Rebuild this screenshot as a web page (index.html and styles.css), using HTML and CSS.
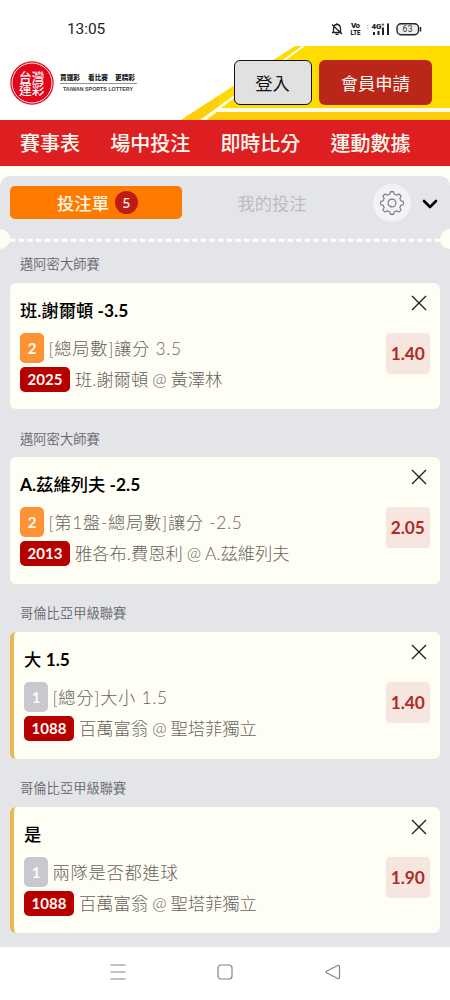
FILE: index.html
```
<!DOCTYPE html>
<html lang="zh-Hant">
<head>
<meta charset="utf-8">
<title>台灣運彩</title>
<link rel="stylesheet" href="styles.css">
</head>
<body>
<div class="status">
  <span class="clock">13:05</span>
  <svg class="status-icons" width="98" height="16" viewBox="0 0 98 16" fill="none" stroke="#222">
    <path d="M3 11.5h9.500M4.500 11.500V8c0-3 1-4.500 3.500-4.500S11.500 5 11.500 8v3.500M8 2v1.500M6.500 13.300h3M3 3.500l10 9.500" stroke-width="1.300"/>
    <g fill="#222" stroke="none" class="tiny"><text x="22" y="7.300" textLength="9">Vo</text><text x="21.500" y="14.300" textLength="10" lengthAdjust="spacingAndGlyphs">LTE</text><text x="42.500" y="8" textLength="13">4G⁺</text></g>
    <path d="M45 11v3M49.500 10v4M54 6.500V14M59 2.500V14" stroke-width="2"/>
    <path d="M38 4.500h1.500M38 7h1.500" stroke="#aaa"/>
    <rect x="68" y="2.700" width="21.500" height="11" rx="4" fill="#eee" stroke-width="1.400"/>
    <path d="M91.500 6v4.500" stroke-width="1.500"/>
    <text x="73.500" y="11.400" class="battery" textLength="10">63</text>
  </svg>
</div>
<header class="header">
  <svg class="stripes" width="450" height="74" viewBox="0 0 450 74">
    <path d="M295 0H450V74H181Z" fill="#ffdc00"/>
    <path d="M181 74L219 49.700V62.500L201 74ZM217 66H450V74H206Z" fill="#fdce0b"/>
    <path d="M302 0L200 74H206L217 66H450V62H221L305 0Z" fill="#fffde9"/>
  </svg>
  <div class="brand">
    <svg class="seal" width="44" height="44" viewBox="0 0 44 44">
      <circle cx="22" cy="22" r="21.700" fill="#e2061a"/>
      <circle cx="22" cy="22" r="20" fill="none" stroke="#fff" stroke-width=".9"/>
      <text class="seal-text"><tspan x="9" y="20.500">台灣</tspan><tspan x="9" y="33">運彩</tspan></text>
    </svg>
    <svg class="slogan" width="78" height="22" viewBox="0 0 78 22">
      <g class="slogan-zh"><text x="0" y="8.300" textLength="20">買運彩</text><text x="28" y="8.300" textLength="20">看比賽</text><text x="55" y="8.300" textLength="20">更精彩</text></g>
      <path d="M0 11.500h77" stroke="#777" stroke-width=".8"/>
      <text class="slogan-en" x="3" y="18.500" textLength="70" lengthAdjust="spacingAndGlyphs">TAIWAN SPORTS LOTTERY</text>
    </svg>
  </div>
  <div class="btn login">登入</div>
  <div class="btn join">會員申請</div>
</header>
<nav class="nav"><span>賽事表</span><span>場中投注</span><span>即時比分</span><span>運動數據</span></nav>
<main class="main">
  <div class="panel">
    <div class="tabs">
      <div class="tab active"><span>投注單</span><b class="count">5</b></div>
      <div class="tab muted">我的投注</div>
      <div class="gear"><svg width="26" height="26" viewBox="0 0 28 28" fill="none" stroke="#777" stroke-width="1.200" stroke-linejoin="round"><path d="M11.700 4.400L12.200 2Q14 1.400 15.800 2L16.300 4.400L19.100 5.600L21.200 4.200Q22.900 5.100 23.800 6.800L22.400 8.900L23.600 11.700L26 12.200Q26.600 14 26 15.800L23.600 16.300L22.400 19.100L23.800 21.200Q22.900 22.900 21.200 23.800L19.100 22.400L16.300 23.600L15.800 26Q14 26.600 12.200 26L11.700 23.600L8.900 22.400L6.800 23.800Q5.100 22.900 4.200 21.200L5.600 19.100L4.400 16.300L2 15.800Q1.400 14 2 12.200L4.400 11.700L5.600 8.900L4.200 6.800Q5.100 5.100 6.800 4.200L8.900 5.600Z"/><circle cx="14" cy="14" r="4.200"/></svg></div>
      <svg class="chevron" width="16" height="12" viewBox="0 0 16 12"><path d="M2 3l6 6 6-6" fill="none" stroke="#000" stroke-width="2.600" stroke-linecap="round" stroke-linejoin="round"/></svg>
    </div>
    <svg class="tear" width="450" height="20" viewBox="0 0 450 20"><path d="M10 11.300H441" stroke="#fffef8" stroke-width="3" stroke-dasharray="5.400 3.270"/><circle cx="0" cy="10" r="10" fill="#fffef5"/><circle cx="450" cy="10" r="10" fill="#fffef5"/></svg>

    <section class="bet">
      <h2 class="league">邁阿密大師賽</h2>
      <article class="card">
        <div class="info">
          <h3 class="pick">班.謝爾頓 <em>-3.5</em></h3>
          <div class="market"><b class="num orange">2</b><span>[總局數]讓分 3.5</span></div>
          <div class="match"><b class="code">2025</b><span>班.謝爾頓<i>@</i>黃澤林</span></div>
        </div>
        <div class="side"><svg class="close" width="16" height="16" viewBox="0 0 16 16"><path d="M1 1l14 14M15 1L1 15" stroke="#222" stroke-width="1.400"/></svg><b class="odds">1.40</b></div>
      </article>
    </section>
    <section class="bet">
      <h2 class="league">邁阿密大師賽</h2>
      <article class="card">
        <div class="info">
          <h3 class="pick"><em>A.</em>茲維列夫 <em>-2.5</em></h3>
          <div class="market"><b class="num orange">2</b><span>[第1盤-總局數]讓分 -2.5</span></div>
          <div class="match"><b class="code">2013</b><span>雅各布.費恩利<i>@</i>A.茲維列夫</span></div>
        </div>
        <div class="side"><svg class="close" width="16" height="16" viewBox="0 0 16 16"><path d="M1 1l14 14M15 1L1 15" stroke="#222" stroke-width="1.400"/></svg><b class="odds">2.05</b></div>
      </article>
    </section>
    <section class="bet">
      <h2 class="league">哥倫比亞甲級聯賽</h2>
      <article class="card live">
        <div class="info">
          <h3 class="pick">大 <em>1.5</em></h3>
          <div class="market"><b class="num">1</b><span>[總分]大小 1.5</span></div>
          <div class="match"><b class="code">1088</b><span>百萬富翁<i>@</i>聖塔菲獨立</span></div>
        </div>
        <div class="side"><svg class="close" width="16" height="16" viewBox="0 0 16 16"><path d="M1 1l14 14M15 1L1 15" stroke="#222" stroke-width="1.400"/></svg><b class="odds">1.40</b></div>
      </article>
    </section>
    <section class="bet">
      <h2 class="league">哥倫比亞甲級聯賽</h2>
      <article class="card live">
        <div class="info">
          <h3 class="pick">是</h3>
          <div class="market"><b class="num">1</b><span>兩隊是否都進球</span></div>
          <div class="match"><b class="code">1088</b><span>百萬富翁<i>@</i>聖塔菲獨立</span></div>
        </div>
        <div class="side"><svg class="close" width="16" height="16" viewBox="0 0 16 16"><path d="M1 1l14 14M15 1L1 15" stroke="#222" stroke-width="1.400"/></svg><b class="odds">1.90</b></div>
      </article>
    </section>
  </div>
</main>
<footer class="sysnav">
  <svg width="16" height="16" viewBox="0 0 16 16" fill="none" stroke="#858585" stroke-width="1.200"><path d="M.5 1h15M.5 8h15M.5 15h15"/></svg>
  <svg width="16" height="16" viewBox="0 0 16 16" fill="none" stroke="#858585" stroke-width="1.200"><rect x="1" y="1" width="14" height="14" rx="3"/></svg>
  <svg width="16" height="16" viewBox="0 0 16 16" fill="none" stroke="#858585" stroke-width="1.200"><path d="M1.500 7.200L13.200 1.300Q14.500 1 14.500 2.300V13.700Q14.500 15 13.200 14.700L1.500 8.800Q.5 8 1.500 7.200Z"/></svg>
</footer>
</body>
</html>
```
FILE: styles.css
```
* { box-sizing: border-box; }
body {
  margin: 0;
  width: 450px;
  height: 1000px;
  overflow: hidden;
  display: flex;
  flex-direction: column;
  background: #fff;
  font-family: Lato, "Noto Sans CJK TC", sans-serif;
  white-space: nowrap;
}
h2, h3 { margin: 0; }
svg { flex: none; display: block; }

.status { height: 46px; display: flex; justify-content: space-between; align-items: center; padding: 12px 23px 0 67px; }
.clock { font: 15.5px Roboto, sans-serif; color: #222; letter-spacing: -.1px; }
.tiny { font: 900 8px Roboto, sans-serif; }
.battery { font: 8.5px Roboto, sans-serif; fill: #333; stroke: none; }

.header { position: relative; height: 74px; display: flex; align-items: flex-start; padding: 14px 18.500px 0 10px; gap: 7.500px; }
.stripes { position: absolute; left: 0; top: 0; z-index: -1; }
.brand { flex: 1; display: flex; gap: 6px; }
.seal { margin-top: 1px; }
.seal-text { font: 500 12.700px "Noto Sans CJK TC", sans-serif; fill: #fff; }
.slogan { margin-top: 12px; }
.slogan-zh { font: 900 6.700px "Noto Sans CJK TC", sans-serif; fill: #222; }
.slogan-en { font: bold 4.800px "Liberation Sans", sans-serif; fill: #444; }
.btn { height: 45px; border-radius: 6px; display: flex; align-items: center; justify-content: center; font-size: 17.300px; padding-bottom: 1px; }
.login { width: 78px; background: #e1e1e1; border: 1.500px solid #111; color: #111; }
.join { width: 112.500px; background: #ba261a; color: #fff8ee; }

.nav { height: 46px; background: #de1f21; display: flex; gap: 30.200px; align-items: center; padding: 0 0 0 20px; color: #fffaf0; font-size: 20px; font-weight: 500; line-height: 28px; }
.main { height: 781px; background: #fffef5; padding-top: 10px; }
.panel { height: 771px; background: #e4e5e9; border-radius: 10px 10px 0 0; padding-top: 10px; }
.tabs { height: 33px; display: flex; align-items: center; padding-left: 10px; }
.tab { display: flex; align-items: center; justify-content: center; font-size: 17.300px; }
.active { width: 172px; height: 33px; padding-left: 3px; background: #ff7b00; color: #fff8ec; border-radius: 5px; gap: 6px; font-weight: 500; }
.count { width: 23px; height: 23px; border-radius: 50%; background: #c01a17; display: grid; place-items: center; font-size: 14px; font-weight: 500; }
.muted { width: 180px; color: #bbbcc1; }
.gear { width: 38px; height: 38px; margin-left: 11px; border-radius: 50%; background: #f2f3f7; display: grid; place-items: center; flex: none; }
.chevron { margin: 2px 0 0 11px; }
.tear { margin-top: 10px; }

.bet { height: 174.700px; }
.league { height: 33.700px; padding: 5px 0 0 20px; font-size: 13.300px; line-height: 20px; font-weight: 350; color: #66666b; }
.card { height: 126.500px; margin: 0 10px; background: #fffef5; border-radius: 6px; display: flex; justify-content: space-between; padding: 0 10px; }
.live { border-left: 4px solid #e9b654; }
.info { padding-top: 15px; }
.pick { font-size: 17.300px; line-height: 26px; height: 35px; font-weight: 500; color: #000; }
.pick em { font-style: normal; font-weight: 700; }
.market { display: flex; gap: 4.500px; height: 34px; align-items: flex-start; color: #66645f; font-size: 17.300px; font-weight: 300; line-height: 31px; letter-spacing: .7px; }
.num { width: 24px; height: 30px; border-radius: 5px; background: #c8c8ce; color: #fffaf2; font-size: 15px; font-weight: 700; display: grid; place-items: center; letter-spacing: 0; }
.orange { background: #fd9236; }
.match { display: flex; gap: 5px; color: #66645f; font-size: 17.300px; font-weight: 300; line-height: 25px; }
.match i { font-style: normal; padding: 0 4px; }
.code { width: 50px; height: 25px; border-radius: 5px; background: #b60000; color: #fffaf2; font-size: 15px; font-weight: 700; display: grid; place-items: center; }
.side { display: flex; flex-direction: column; align-items: flex-end; padding-top: 12px; }
.close { margin-right: 3px; }
.odds { width: 44.500px; height: 41px; margin-top: 22px; border-radius: 4px; background: #f7e6df; color: #ae2a27; font-size: 17.300px; display: grid; place-items: center; }

.sysnav { height: 53px; display: flex; gap: 91.500px; align-items: center; padding: 0 0 3px 109.500px; }
```
